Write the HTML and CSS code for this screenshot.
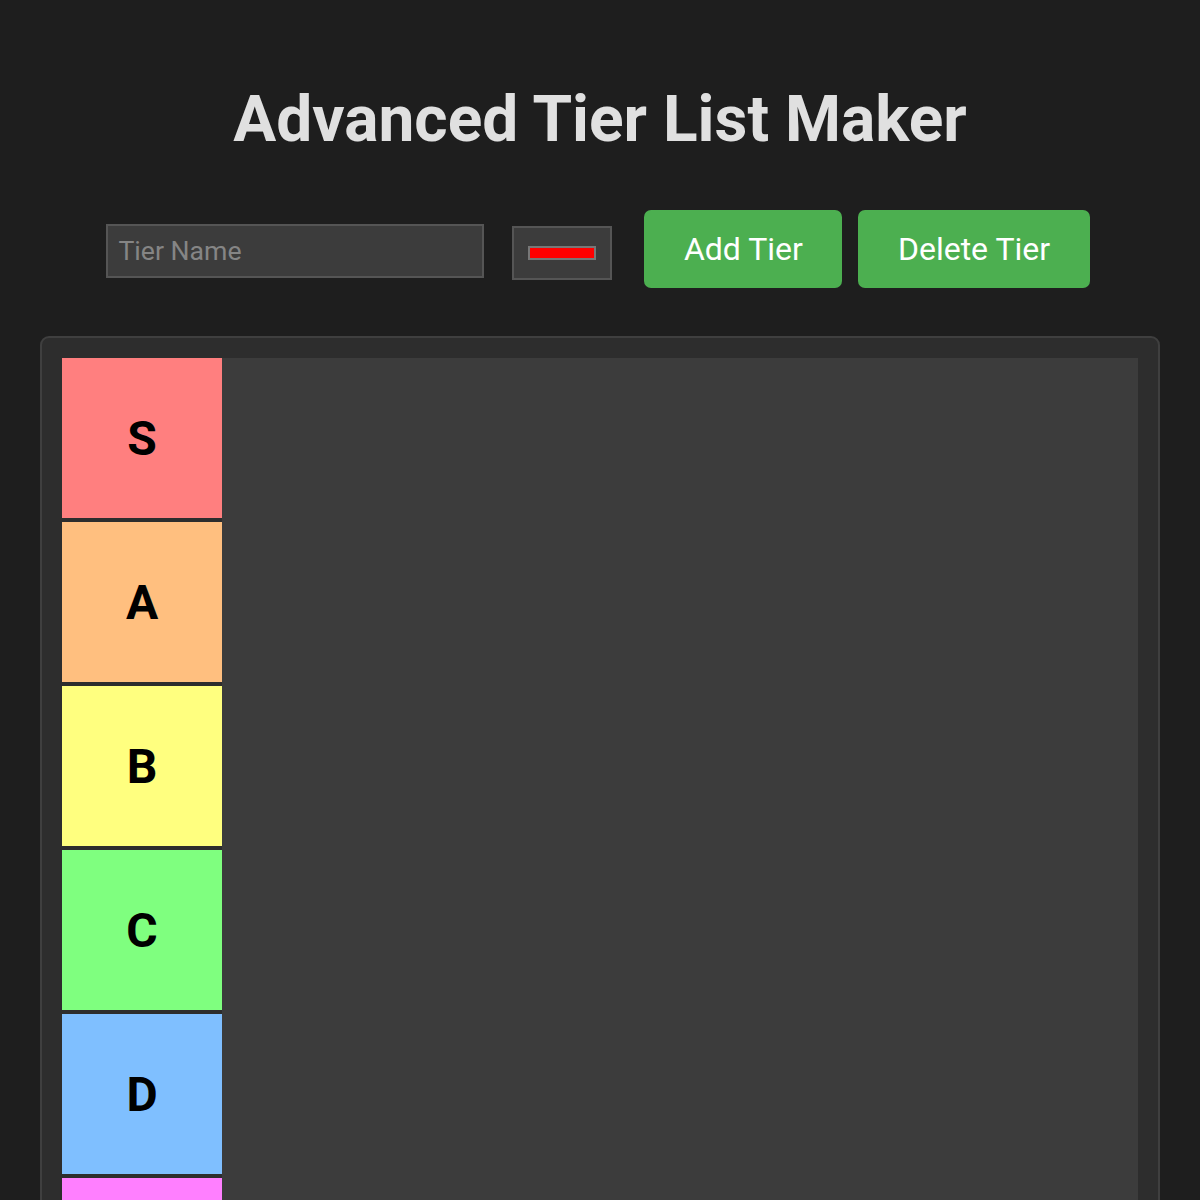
FILE: index.html
```html
<!DOCTYPE html>
<html lang="en">
<head>
<meta charset="utf-8">
<title>Advanced Tier List Maker</title>
<link rel="stylesheet" href="styles.css">
</head>
<body>
<div class="page">
  <h1 class="title">Advanced Tier List Maker</h1>
  <div class="controls">
    <input class="tier-name" type="text" placeholder="Tier Name">
    <input class="tier-color" type="color" value="#ff0000">
    <button class="btn btn-add">Add Tier</button>
    <button class="btn">Delete Tier</button>
  </div>
  <div class="board">
    <div class="tier"><div class="tier-label tier-s">S</div><div class="tier-items"></div></div>
    <div class="tier"><div class="tier-label tier-a">A</div><div class="tier-items"></div></div>
    <div class="tier"><div class="tier-label tier-b">B</div><div class="tier-items"></div></div>
    <div class="tier"><div class="tier-label tier-c">C</div><div class="tier-items"></div></div>
    <div class="tier"><div class="tier-label tier-d">D</div><div class="tier-items"></div></div>
    <div class="tier"><div class="tier-label tier-e">E</div><div class="tier-items"></div></div>
  </div>
</div>
</body>
</html>
```
FILE: styles.css
```css
* { box-sizing: border-box; }
html, body {
  margin: 0;
  background: #1e1e1e;
  font-family: Roboto, "Liberation Sans", sans-serif;
  color: #e0e0e0;
}
.page {
  padding: 82px 40px 0;
}
.title {
  margin: 0 0 53px;
  text-align: center;
  font-size: 64px;
  font-weight: 700;
  line-height: 75px;
  color: #e0e0e0;
}
.controls {
  display: flex;
  justify-content: center;
  align-items: center;
  height: 78px;
  margin: 0 4px 48px 0;
}
.tier-name {
  width: 378px;
  height: 54px;
  margin-top: 4px;
  padding: 10px;
  border: 2px solid #555;
  background: #3c3c3c;
  color: #e0e0e0;
  font-family: Roboto, "Liberation Sans", sans-serif;
  font-size: 26.67px;
  outline: none;
}
.tier-name::placeholder { color: #858585; }
.tier-color {
  -webkit-appearance: none;
  appearance: none;
  width: 100px;
  height: 54px;
  margin: 8px 32px 0 28px;
  padding: 10px;
  border: 2px solid #555;
  background: #3c3c3c;
}
.tier-color::-webkit-color-swatch-wrapper { padding: 8px 4px; }
.tier-color::-webkit-color-swatch { border: 2px solid #777; border-radius: 0; }
.btn {
  height: 78px;
  padding: 0 39.5px;
  border: none;
  border-radius: 7px;
  background: #4caf50;
  color: #fff;
  font-family: Roboto, "Liberation Sans", sans-serif;
  font-size: 32px;
}
.btn-add { margin-right: 16px; }
.board {
  border: 2px solid #3f3f3f;
  border-radius: 9px;
  background: #2d2d2d;
  padding: 20px;
  min-height: 900px;
}
.tier {
  display: flex;
}
.tier-label {
  flex: 0 0 160px;
  height: 160px;
  margin-bottom: 4px;
  display: flex;
  align-items: center;
  justify-content: center;
  color: #000;
  font-size: 48px;
  font-weight: 700;
}
.tier-items {
  flex: 1;
  background: #3c3c3c;
}
.tier-s { background: #ff7f7f; }
.tier-a { background: #ffbf7f; }
.tier-b { background: #ffff7f; }
.tier-c { background: #7fff7f; }
.tier-d { background: #7fbfff; }
.tier-e { background: #ff7fff; }
```
